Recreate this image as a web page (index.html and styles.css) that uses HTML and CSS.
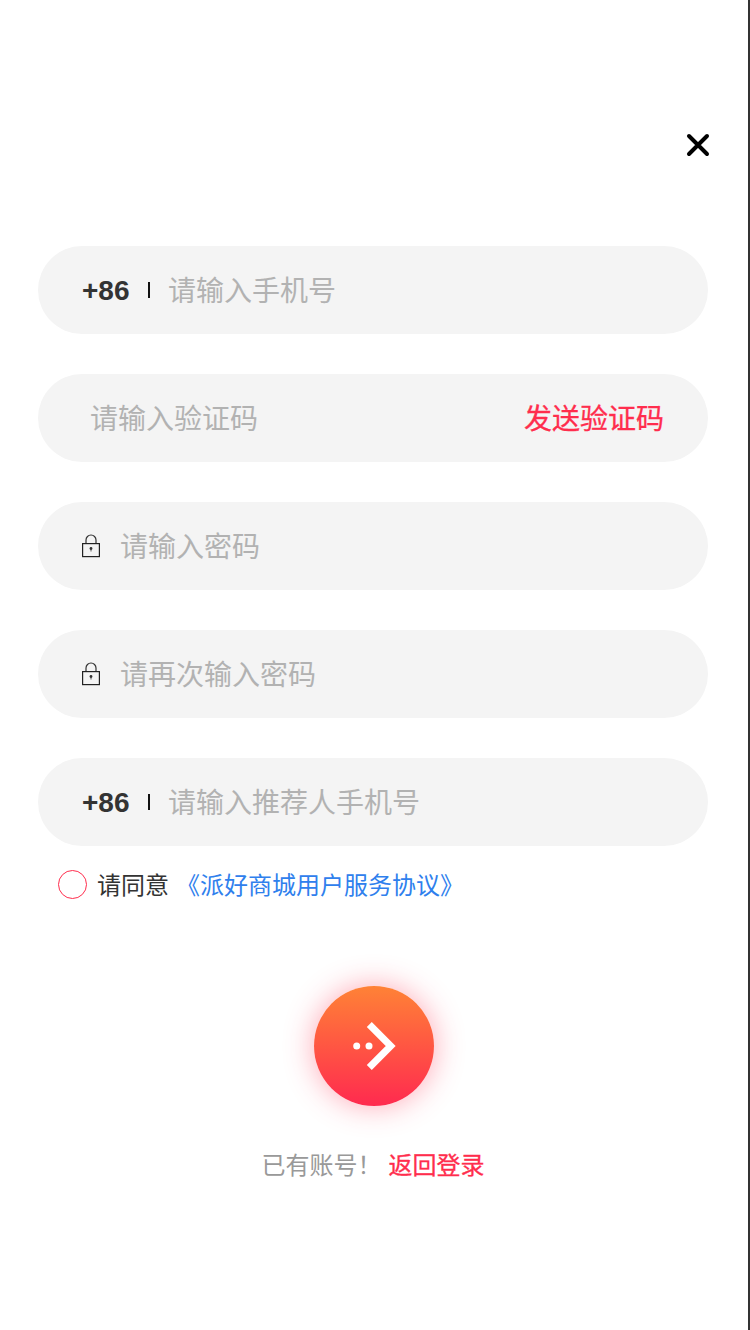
FILE: index.html
```html
<!DOCTYPE html>
<html lang="zh-CN">
<head>
<meta charset="utf-8">
<title>注册</title>
<link rel="stylesheet" href="styles.css">
</head>
<body>
<main class="page">
  <div class="close-row">
    <svg class="close" width="24" height="24" viewBox="0 0 24 24"><path d="M3 3L21 21M21 3L3 21" fill="none" stroke="#000" stroke-width="4" stroke-linecap="round"/></svg>
  </div>
  <form class="form">
    <div class="field">
      <span class="code">+86</span><i class="sep"></i><span class="ph">请输入手机号</span>
    </div>
    <div class="field field-code">
      <span class="ph">请输入验证码</span><span class="send">发送验证码</span>
    </div>
    <div class="field field-lock">
      <svg class="lock" width="20" height="24" viewBox="0 0 20 24"><path d="M5 10V6a5 5 0 0 1 10 0V10" fill="none" stroke="#333" stroke-width="1.200"/><rect x="1.600" y="9.600" width="16.800" height="13" fill="none" stroke="#222" stroke-width="1.200"/><circle cx="10" cy="14.500" r="1.400" fill="#333"/><path d="M10 14.500v3" stroke="#333" stroke-width="0.800"/></svg>
      <span class="ph">请输入密码</span>
    </div>
    <div class="field field-lock">
      <svg class="lock" width="20" height="24" viewBox="0 0 20 24"><path d="M5 10V6a5 5 0 0 1 10 0V10" fill="none" stroke="#333" stroke-width="1.200"/><rect x="1.600" y="9.600" width="16.800" height="13" fill="none" stroke="#222" stroke-width="1.200"/><circle cx="10" cy="14.500" r="1.400" fill="#333"/><path d="M10 14.500v3" stroke="#333" stroke-width="0.800"/></svg>
      <span class="ph">请再次输入密码</span>
    </div>
    <div class="field">
      <span class="code">+86</span><i class="sep"></i><span class="ph">请输入推荐人手机号</span>
    </div>
  </form>
  <div class="agree">
    <i class="radio"></i><span class="agree-text">请同意</span><span class="agree-link">《派好商城用户服务协议》</span>
  </div>
  <div class="submit-row">
    <div class="submit">
      <svg width="60" height="60" viewBox="0 0 60 60"><circle cx="12.700" cy="30" r="3.500" fill="#fff"/><circle cx="25" cy="30" r="3.500" fill="#fff"/><path d="M25.300 8.500L46.700 30L25.300 51.500" fill="none" stroke="#fff" stroke-width="7"/></svg>
    </div>
  </div>
  <p class="login"><span class="login-q">已有账号！</span><span class="login-link">返回登录</span></p>
</main>
</body>
</html>
```
FILE: styles.css
```css
* { box-sizing: border-box; }
html, body { margin: 0; padding: 0; background: #fff; }
body { font-family: "Noto Sans CJK SC", "Liberation Sans", sans-serif; }
.page {
  width: 750px;
  height: 1330px;
  overflow: hidden;
  border-right: 2px solid #333;
  padding-top: 133px;
}
.close-row { display: flex; justify-content: flex-end; padding-right: 38px; height: 113px; }
.close { display: block; }
.form { display: flex; flex-direction: column; gap: 40px; padding: 0 40px 0 38px; }
.field {
  display: flex;
  align-items: center;
  height: 88px;
  border-radius: 44px;
  background: #f4f4f4;
  padding-left: 44px;
  font-size: 28px;
}
.code {
  font-family: "Liberation Sans", sans-serif;
  font-weight: 700;
  color: #333;
  width: 48px;
  line-height: 30px;
  padding-top: 2px;
}
.sep { width: 2px; height: 16px; background: #111; margin: 0 18px 0 18px; }
.ph { color: #b2b2b2; line-height: 38px; padding-bottom: 2px; }
.field-code { padding: 0 44px 0 52px; justify-content: space-between; }
.send { color: #ff2d4d; line-height: 38px; padding-bottom: 2px; -webkit-text-stroke: 0.3px #ff2d4d; }
.field-lock { gap: 19px; }
.field-lock .lock { width: 20px; height: 24px; flex: none; margin-left: -1px; }
.agree { display: flex; align-items: center; margin: 10px 0 0 58px; height: 56px; font-size: 24px; line-height: 34px; }
.radio { width: 29px; height: 29px; border: 1px solid #ff2d4d; border-radius: 50%; margin-right: 10px; }
.agree-text { color: #333; margin-right: 7px; }
.agree-link { color: #2f80ed; }
.submit-row { display: flex; justify-content: center; margin-top: 74px; }
.submit {
  width: 120px;
  height: 120px;
  border-radius: 50%;
  background: linear-gradient(180deg, #ff8236 0%, #ff2a4f 100%);
  box-shadow: 0 0 30px rgba(255, 45, 77, 0.42);
  display: flex;
  align-items: center;
  justify-content: center;
}
.login { display: flex; justify-content: center; margin: 40px 0 0; font-size: 24px; line-height: 36px; padding-right: 2px; }
.login-q { color: #999; margin-right: 7px; }
.login-link { color: #ff2d4d; -webkit-text-stroke: 0.3px #ff2d4d; }
```
